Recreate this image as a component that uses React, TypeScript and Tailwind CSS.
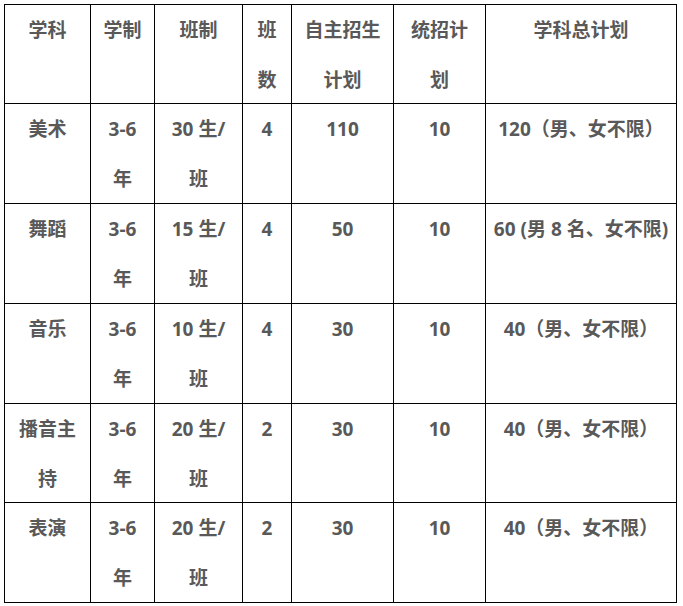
const COLS = ['w-[86px]', 'w-[64px]', 'w-[88px]', 'w-[49px]', 'w-[102px]', 'w-[92px]', 'w-[191px]'];

const HEADER = [['学科'], ['学制'], ['班制'], ['班', '数'], ['自主招生', '计划'], ['统招计', '划'], ['学科总计划']];

const ROWS: { h: string; cells: string[][] }[] = [
  { h: 'h-[100px]', cells: [['美术'], ['3-6', '年'], ['30 生/', '班'], ['4'], ['110'], ['10'], ['120（男、女不限）']] },
  { h: 'h-[100px]', cells: [['舞蹈'], ['3-6', '年'], ['15 生/', '班'], ['4'], ['50'], ['10'], ['60 (男 8 名、女不限)']] },
  { h: 'h-[100px]', cells: [['音乐'], ['3-6', '年'], ['10 生/', '班'], ['4'], ['30'], ['10'], ['40（男、女不限）']] },
  { h: 'h-[99px]', cells: [['播音主', '持'], ['3-6', '年'], ['20 生/', '班'], ['2'], ['30'], ['10'], ['40（男、女不限）']] },
  { h: 'h-[100px]', cells: [['表演'], ['3-6', '年'], ['20 生/', '班'], ['2'], ['30'], ['10'], ['40（男、女不限）']] },
];

function Row({ h, cells }: { h: string; cells: string[][] }) {
  return (
    <div className="flex">
      {cells.map((lines, i) => (
        <div
          key={i}
          className={`${COLS[i]} ${h} shrink-0 border-r border-b border-black text-center`}
        >
          {lines.map((l, j) => (
            <div key={j} className="h-[50px] leading-[51px] whitespace-nowrap">
              {l}
            </div>
          ))}
        </div>
      ))}
    </div>
  );
}

export default function App() {
  return (
    <div className="w-[683px] h-[606px] bg-white pt-1 pl-1 font-['Open_Sans','Noto_Sans_CJK_SC',sans-serif] text-[19px] font-bold text-[#595959]">
      <div className="w-fit border-l border-t border-black">
        <Row h="h-[99px]" cells={HEADER} />
        {ROWS.map((r, i) => (
          <Row key={i} h={r.h} cells={r.cells} />
        ))}
      </div>
    </div>
  );
}
